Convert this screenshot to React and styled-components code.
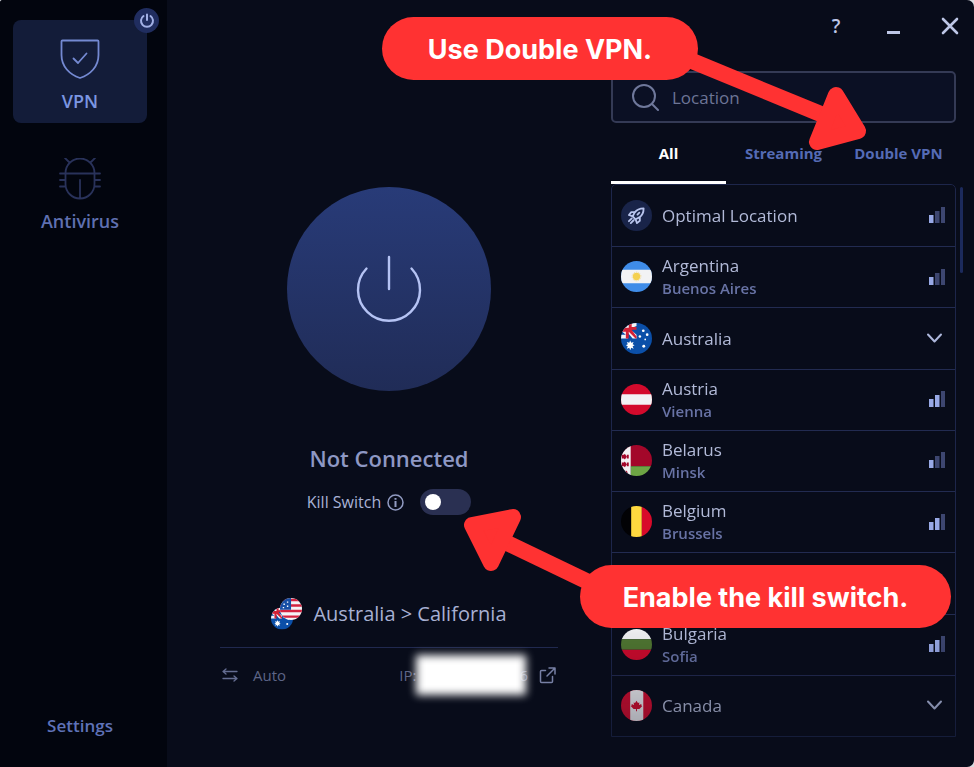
import React, { useState } from "react";
import styled, { createGlobalStyle } from "styled-components";

const GlobalStyle = createGlobalStyle`
  *, *::before, *::after { box-sizing: border-box; }
  body { margin: 0; background: #d9dbe0; font-family: "Open Sans", "Noto Sans", sans-serif; }
  button, input { font: inherit; color: inherit; }
  button { background: none; border: 0; padding: 0; cursor: pointer; }
`;

const Window = styled.div`
  position: relative;
  display: grid;
  grid-template-columns: 167px minmax(0, 1fr) 363px;
  min-height: 100vh;
  overflow: hidden;
  border-radius: 3px 7px 7px 0;
  background: #080c1a;
`;

const Sidebar = styled.nav`
  display: flex;
  flex-direction: column;
  gap: 17px;
  padding: 20px 20px 29px 13px;
  background: #02050e;
`;

const NavTile = styled.button`
  position: relative;
  display: flex;
  flex-direction: column;
  align-items: center;
  gap: 9px;
  height: 103px;
  padding-top: 18px;
  border-radius: 8px;
  background: ${(p) => (p.$active ? "#131c39" : "transparent")};
  color: ${(p) => (p.$active ? "#7b96e2" : "#5f70b0")};
  font-size: 18px;
  line-height: 24px;
  font-weight: 600;
`;

const StatusBadge = styled.span`
  position: absolute;
  top: -12px;
  right: -12px;
  display: grid;
  place-items: center;
  width: 25px;
  height: 25px;
  border-radius: 50%;
  background: #202d5f;
`;

const SettingsButton = styled.button`
  margin-top: auto;
  color: #5f72b8;
  font-size: 17px;
  line-height: 24px;
  font-weight: 600;
`;

const Main = styled.main`
  display: flex;
  flex-direction: column;
  align-items: center;
  padding: 187px 52px 0;
`;

const PowerButton = styled.button`
  display: grid;
  place-items: center;
  width: 204px;
  height: 204px;
  flex: none;
  border-radius: 50%;
  background: linear-gradient(#283b78, #202c57);
`;

const Status = styled.h1`
  margin: 51px 0 12px;
  color: #8e98c4;
  font-size: 22px;
  line-height: 32px;
  font-weight: 600;
`;

const KillSwitchRow = styled.div`
  display: flex;
  align-items: center;
  height: 32px;
  color: #a9b2d6;
  font-size: 16px;
`;

const InfoButton = styled.button`
  display: flex;
  margin: 0 16px 0 6px;
`;

const Toggle = styled.input`
  appearance: none;
  display: flex;
  align-items: center;
  width: 51px;
  height: 26px;
  margin: 0;
  padding: 0 5px;
  border-radius: 13px;
  background: #2a3052;
  cursor: pointer;
  &::before {
    content: "";
    width: 16px;
    height: 16px;
    border-radius: 50%;
    background: #fff;
  }
  &:checked { justify-content: flex-end; background: #4562c0; }
`;

const Route = styled.div`
  display: flex;
  align-items: center;
  justify-content: center;
  gap: 11px;
  width: 100%;
  max-width: 338px;
  margin-top: 80px;
  padding-bottom: 17px;
  border-bottom: 1px solid #20294f;
  color: #a7b0d3;
  font-size: 20px;
  line-height: 32px;
`;

const Connection = styled.div`
  display: flex;
  align-items: center;
  width: 100%;
  max-width: 338px;
  padding: 7px 2px 0;
  color: #5d6587;
  font-size: 15px;
`;

const Protocol = styled.button`
  display: flex;
  align-items: center;
  gap: 15px;
  margin-right: auto;
`;

const Address = styled.span`
  display: flex;
  align-items: center;
  margin-right: 11px;
`;

const DetailsButton = styled.button`
  display: flex;
`;

const Redaction = styled.span`
  z-index: 1;
  width: 110px;
  height: 40px;
  margin-right: -7px;
  background: #fff;
  filter: blur(4px);
`;

const Panel = styled.aside`
  display: flex;
  flex-direction: column;
  padding: 0 18px 30px 0;
`;

const WindowControls = styled.div`
  display: flex;
  justify-content: flex-end;
  align-items: center;
  gap: 37px;
  height: 51px;
  margin: 0 -4px 20px 0;
  color: #bdc6e6;
`;

const ControlButton = styled.button`
  display: grid;
  place-items: center;
  width: 20px;
  height: 24px;
  font-size: 19px;
  line-height: 24px;
  font-weight: 600;
`;

const SearchBox = styled.label`
  display: flex;
  align-items: center;
  gap: 13px;
  height: 52px;
  padding: 0 19px;
  border: 2px solid #343a55;
  border-radius: 5px;
  background: #0b1024;
  color: #6d7596;
`;

const SearchInput = styled.input`
  flex: 1;
  min-width: 0;
  padding: 0;
  border: 0;
  outline: 0;
  background: transparent;
  font-size: 17px;
  &::placeholder { color: #6d7596; opacity: 1; }
`;

const Tabs = styled.div`
  display: grid;
  grid-template-columns: repeat(3, 1fr);
  height: 61px;
`;

const Tab = styled.button`
  padding-top: 2px;
  border-bottom: 3px solid ${(p) => (p.$active ? "#fff" : "transparent")};
  color: ${(p) => (p.$active ? "#fff" : "#556bb5")};
  font-size: 15px;
  font-weight: 700;
`;

const ListArea = styled.div`
  position: relative;
  display: flex;
  flex: 1;
`;

const LocationList = styled.ul`
  display: grid;
  flex: 1;
  grid-auto-rows: 1fr;
  margin: 0;
  padding: 0;
  border: 1px solid #1d264b;
  border-radius: 5px 5px 0 0;
  list-style: none;
  mask-image: linear-gradient(#000 80%, rgba(0, 0, 0, 0.65));
`;

const LocationItem = styled.li`
  display: flex;
  min-height: 56px;
  & + & { border-top: 1px solid #222b51; }
`;

const LocationButton = styled.button`
  display: flex;
  align-items: center;
  gap: 10px;
  width: 100%;
  padding: 0 10px 1px 9px;
  text-align: left;
`;

const LocationText = styled.span`
  display: flex;
  flex: 1;
  flex-direction: column;
`;

const Name = styled.span`
  color: #b2bad8;
  font-size: 17px;
  line-height: 23px;
`;

const City = styled.span`
  color: #6873a5;
  font-size: 15px;
  line-height: 22px;
  font-weight: 600;
`;

const OptimalIcon = styled.span`
  display: grid;
  place-items: center;
  width: 31px;
  height: 31px;
  border-radius: 50%;
  background: #192449;
`;

const Scrollbar = styled.span`
  position: absolute;
  top: 3px;
  right: -7px;
  width: 3px;
  height: 86px;
  border-radius: 2px;
  background: #1c2a5c;
`;

const FlagSvg = styled.svg`
  display: block;
  flex: none;
  border-radius: 50%;
`;

const Callout = styled.div`
  position: absolute;
  z-index: 3;
  top: ${(p) => p.$top}px;
  right: ${(p) => p.$right}px;
  display: grid;
  place-items: center;
  width: ${(p) => p.$width}px;
  height: 63px;
  padding-top: 2px;
  border-radius: 32px;
  background: #ff3232;
  color: #fff;
  font-family: Inter, "Noto Sans", sans-serif;
  font-size: 27px;
  font-weight: 700;
  white-space: nowrap;
`;

const Arrow = styled.svg`
  position: absolute;
  z-index: 2;
  top: ${(p) => p.$top}px;
  right: ${(p) => p.$right}px;
  stroke: #ff3232;
  stroke-width: 16;
  stroke-linejoin: round;
  fill: #ff3232;
  pointer-events: none;
`;

function AustraliaArt() {
  return (
    <>
      <path fill="#0b4fa8" d="M0 0h32v32H0z" />
      <path fill="#f4f4f7" d="M16 0v3L9 6l7 6v4h-4L7 10v6H0v-4h5L0 8V0z" />
      <path fill="#d32035" d="M8 0h3v4h5v3h-5l5 7v2h-1L8 9v7H5V9H0V5h8z" />
      <g fill="#fff">
        <path d="m9.500 18 1 2.500 2.500-1-1 2.500 2 1-2 1 1 2.500-2.500-1-1 2.500-1-2.500-2.500 1 1-2.500-2-1 2-1-1-2.500 2.500 1z" />
        <circle cx="23" cy="8" r="1.400" />
        <circle cx="19.500" cy="14" r="1.300" />
        <circle cx="27" cy="12" r="1.400" />
        <circle cx="25" cy="17" r="0.900" />
        <circle cx="23.500" cy="24" r="1.500" />
      </g>
    </>
  );
}

const flagArt = {
  argentina: (
    <>
      <path fill="#3f8ce8" d="M0 0h32v32H0z" />
      <path fill="#f2f2f4" d="M0 9h32v14H0z" />
      <circle cx="16" cy="16" r="3.800" fill="#f4d04f" />
      <circle cx="16" cy="16" r="4.500" fill="none" stroke="#f4d98a" strokeDasharray="1 1" />
    </>
  ),
  australia: <AustraliaArt />,
  austria: (
    <>
      <path fill="#d30a2c" d="M0 0h32v32H0z" />
      <path fill="#f2f2f4" d="M0 10.500h32v11H0z" />
    </>
  ),
  belarus: (
    <>
      <path fill="#a3072a" d="M0 0h32v22H0z" />
      <path fill="#6da544" d="M10 22h22v10H10z" />
      <path fill="#f2f2f4" d="M0 0h10v32H0z" />
      <path
        fill="#a3072a"
        d="m4 9 2 3-2 3-3-3zM1 10h2v4H1zM6 10h2v4H6zM4 17l2 3-2 3-3-3zM1 18h2v4H1zM6 18h2v4H6zM5 26l2 2-2 2z"
      />
    </>
  ),
  belgium: (
    <>
      <path fill="#020205" d="M0 0h11v32H0z" />
      <path fill="#ffd93f" d="M10.500 0h11v32h-11z" />
      <path fill="#d80a2a" d="M21.500 0H32v32H21.500z" />
    </>
  ),
  bulgaria: (
    <>
      <path fill="#f0f0f2" d="M0 0h32v10.500H0z" />
      <path fill="#4f7631" d="M0 10.500h32v11H0z" />
      <path fill="#cc0a2c" d="M0 21.500h32V32H0z" />
    </>
  ),
  canada: (
    <>
      <path fill="#d40d30" d="M0 0h32v32H0z" />
      <path fill="#f0f0f4" d="M9.500 0h13.500v32H9.500z" />
      <path
        fill="#d40d30"
        d="m16 11 1.500 2.500 1.500-.5-.5 2.500 2.500-1v1.500l1 .5-3 3h-2.500V22h-1v-2.500H13l-3-3 1-.5v-1.500l2.500 1-.5-2.500 1.500.5z"
      />
    </>
  ),
  usa: (
    <>
      <path fill="#f4f4f7" d="M0 0h32v32H0z" />
      <path stroke="#d32340" strokeWidth="3.600" d="M0 3h32M0 11h32M0 19h32M0 27h32" />
      <path fill="#174fa5" d="M0 0h16v17H0z" />
      <path fill="#fff" d="M5 8h2v2H5zM10 5h2v2h-2zM10 11h2v2h-2zM4 13h2v2H4z" />
    </>
  ),
};

function Flag({ code, size = 31 }) {
  return (
    <FlagSvg width={size} height={size} viewBox="0 0 32 32" aria-hidden="true">
      {flagArt[code]}
    </FlagSvg>
  );
}

function RouteFlags() {
  return (
    <svg width="31" height="32" viewBox="0 0 31 32" aria-hidden="true">
      <defs>
        <clipPath id="route-from"><circle cx="11" cy="20.500" r="11" /></clipPath>
        <clipPath id="route-to"><circle cx="20" cy="11" r="11" /></clipPath>
      </defs>
      <g clipPath="url(#route-from)">
        <g transform="translate(0 9.500) scale(.69)">{flagArt.australia}</g>
      </g>
      <g clipPath="url(#route-to)">
        <g transform="translate(9) scale(.69)">{flagArt.usa}</g>
      </g>
    </svg>
  );
}

function Signal({ level }) {
  const fill = (bar) => (bar <= level ? "#98a9e6" : "#3d4670");
  return (
    <svg width="16" height="16" viewBox="0 0 16 16" role="img" aria-label={`Signal ${level} of 3`}>
      <path fill={fill(1)} d="M0 8h4.500v8H0z" />
      <path fill={fill(2)} d="M6 4h4.500v12H6z" />
      <path fill={fill(3)} d="M12 0h4v16h-4z" />
    </svg>
  );
}

function Chevron() {
  return (
    <svg width="21" height="16" viewBox="0 0 21 16" fill="none" stroke="#aeb8dc" strokeWidth="2" strokeLinecap="round" strokeLinejoin="round" aria-hidden="true">
      <path d="m4 4.500 6.500 7L17 4.500" />
    </svg>
  );
}

const locations = [
  { name: "Optimal Location", optimal: true, level: 1 },
  { name: "Argentina", city: "Buenos Aires", flag: "argentina", level: 1 },
  { name: "Australia", flag: "australia" },
  { name: "Austria", city: "Vienna", flag: "austria", level: 2 },
  { name: "Belarus", city: "Minsk", flag: "belarus", level: 1 },
  { name: "Belgium", city: "Brussels", flag: "belgium", level: 2 },
  null,
  { name: "Bulgaria", city: "Sofia", flag: "bulgaria", level: 2 },
  { name: "Canada", flag: "canada" },
];

function LocationRow({ item }) {
  if (!item) return <LocationItem aria-hidden="true" />;
  return (
    <LocationItem>
      <LocationButton type="button">
        {item.optimal ? (
          <OptimalIcon>
            <svg width="19" height="19" viewBox="0 0 20 20" fill="none" stroke="#b9c5ee" strokeWidth="1.900" strokeLinecap="round" strokeLinejoin="round" aria-hidden="true">
              <path d="M17.500 2.500c-4 0-7 1-9.500 4.500L6 11l3 3 4-2c3.500-2.500 4.500-5.500 4.500-9.500zM8 6.500H4.500L2 9.500l4 1.500M13.500 12v3.500L10.500 18 9 14M11 9l2-2M5 13l-3 3M7 15l-3 3" />
            </svg>
          </OptimalIcon>
        ) : (
          <Flag code={item.flag} />
        )}
        <LocationText>
          <Name>{item.name}</Name>
          {item.city && <City>{item.city}</City>}
        </LocationText>
        {item.level ? <Signal level={item.level} /> : <Chevron />}
      </LocationButton>
    </LocationItem>
  );
}

const tabs = ["All", "Streaming", "Double VPN"];

export default function App() {
  const [tab, setTab] = useState("All");
  const [kill, setKill] = useState(false);
  return (
    <>
      <GlobalStyle />
      <Window>
        <Sidebar>
          <NavTile type="button" $active>
            <svg width="42" height="42" viewBox="0 0 42 42" fill="none" stroke="#7489d2" strokeWidth="1.800" strokeLinecap="round" strokeLinejoin="round" aria-hidden="true">
              <path d="M3.500 2.500h35a1 1 0 0 1 1 1V17c0 11.500-8 19.500-18.500 23C10.500 36.500 2.500 28.500 2.500 17V3.500a1 1 0 0 1 1-1z" />
              <path d="m14.500 20.500 4.500 4.500 8.500-9.500" />
            </svg>
            VPN
            <StatusBadge>
              <svg width="16" height="16" viewBox="0 0 16 16" fill="none" stroke="#a3b1e6" strokeWidth="2" strokeLinecap="round" aria-hidden="true">
                <path d="M8 1.500v5.500M4.500 3a6 6 0 1 0 7 0" />
              </svg>
            </StatusBadge>
          </NavTile>
          <NavTile type="button">
            <svg width="42" height="42" viewBox="0 0 42 42" fill="none" stroke="#29325a" strokeWidth="1.800" strokeLinecap="round" aria-hidden="true">
              <path d="M6.500 15a14.500 14.500 0 0 1 29 0v11a14.500 14.500 0 0 1-29 0zM1 15.500h40M1 22h5M1 28.500h5M36 22h5M36 28.500h5M6 0l4.500 4.500M36 0l-4.500 4.500M21 22v18" />
            </svg>
            Antivirus
          </NavTile>
          <SettingsButton type="button">Settings</SettingsButton>
        </Sidebar>

        <Main>
          <PowerButton type="button" aria-label="Connect">
            <svg width="66" height="68" viewBox="0 0 66 68" fill="none" stroke="#b5c3f4" strokeWidth="2.400" strokeLinecap="round" aria-hidden="true">
              <path d="M33 2v32M10.500 13.500a31 31 0 1 0 45 0" />
            </svg>
          </PowerButton>
          <Status>Not Connected</Status>
          <KillSwitchRow>
            <label htmlFor="kill-switch">Kill Switch</label>
            <InfoButton type="button" aria-label="About Kill Switch">
              <svg width="17" height="17" viewBox="0 0 17 17" fill="none" stroke="#919bc2" strokeWidth="1.500" aria-hidden="true">
                <circle cx="8.500" cy="8.500" r="7.500" />
                <path d="M8.500 7v6M8.500 4v1.800" strokeWidth="2" />
              </svg>
            </InfoButton>
            <Toggle id="kill-switch" type="checkbox" role="switch" checked={kill} onChange={(e) => setKill(e.target.checked)} />
          </KillSwitchRow>
          <Route>
            <RouteFlags />
            <span>Australia &gt; California</span>
          </Route>
          <Connection>
            <Protocol type="button">
              <svg width="16" height="14" viewBox="0 0 16 14" fill="none" stroke="#646d91" strokeWidth="1.300" strokeLinecap="round" strokeLinejoin="round" aria-hidden="true">
                <path d="M15 3.500H1L4 1M1 10.500h14l-3 2.500M4 6 1 3.500M12 8l3 2.500" />
              </svg>
              Auto
            </Protocol>
            <Address>
              IP:
              <Redaction />
              <span>6</span>
            </Address>
            <DetailsButton type="button" aria-label="Open IP details">
              <svg width="17" height="17" viewBox="0 0 17 17" fill="none" stroke="#7780a5" strokeWidth="1.500" strokeLinecap="round" strokeLinejoin="round" aria-hidden="true">
                <path d="M6.500 3.500h-4a1 1 0 0 0-1 1v10a1 1 0 0 0 1 1h10a1 1 0 0 0 1-1v-5M10 1h6v6M15.500 1.500 8 9" />
              </svg>
            </DetailsButton>
          </Connection>
        </Main>

        <Panel>
          <WindowControls>
            <ControlButton type="button" aria-label="Help">?</ControlButton>
            <ControlButton type="button" aria-label="Minimize">
              <svg width="13" height="18" viewBox="0 0 13 18" aria-hidden="true">
                <path d="M0 14h13v3H0z" fill="currentColor" />
              </svg>
            </ControlButton>
            <ControlButton type="button" aria-label="Close">
              <svg width="18" height="18" viewBox="0 0 18 18" stroke="currentColor" strokeWidth="2.600" strokeLinecap="round" aria-hidden="true">
                <path d="m2 2 14 14M16 2 2 16" />
              </svg>
            </ControlButton>
          </WindowControls>
          <SearchBox>
            <svg width="27" height="27" viewBox="0 0 27 27" fill="none" stroke="#6f789b" strokeWidth="2" strokeLinecap="round" aria-hidden="true">
              <circle cx="12" cy="12" r="11" />
              <path d="m20 20 6 6" />
            </svg>
            <SearchInput type="text" placeholder="Location" aria-label="Location" />
          </SearchBox>
          <Tabs role="tablist">
            {tabs.map((name) => (
              <Tab key={name} type="button" role="tab" aria-selected={tab === name} $active={tab === name} onClick={() => setTab(name)}>
                {name}
              </Tab>
            ))}
          </Tabs>
          <ListArea>
            <LocationList>
              {locations.map((item, index) => (
                <LocationRow key={index} item={item} />
              ))}
            </LocationList>
            <Scrollbar />
          </ListArea>
        </Panel>

        <Arrow $top={40} $right={94} width="220" height="120" viewBox="660 40 220 120" aria-hidden="true">
          <path d="m680 56 148 61" />
          <path d="m836 95 22 36-41 11z" />
        </Arrow>
        <Callout $top={17} $right={276} $width={316}>Use Double VPN.</Callout>
        <Arrow $top={500} $right={354} width="160" height="110" viewBox="460 500 160 110" aria-hidden="true">
          <path d="m505 542 100 48" />
          <path d="m472 525 41-8-22 46z" />
        </Arrow>
        <Callout $top={565} $right={23} $width={371}>Enable the kill switch.</Callout>
      </Window>
    </>
  );
}
